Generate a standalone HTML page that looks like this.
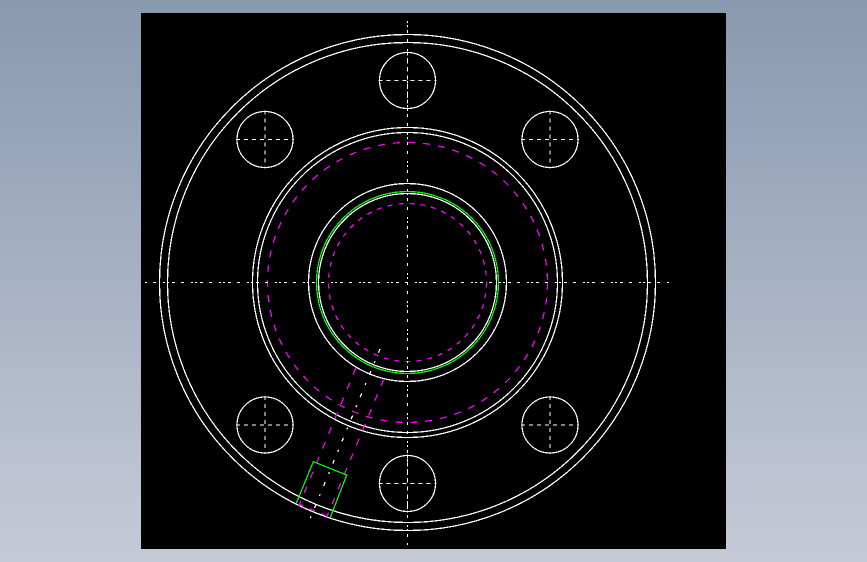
<!DOCTYPE html>
<html>
<head>
<meta charset="utf-8">
<style>
html,body{margin:0;padding:0;width:867px;height:562px;overflow:hidden}
body{background:linear-gradient(to bottom,#8899b0 0%,#c6cad7 100%);position:relative}
svg{position:absolute;left:0;top:0}
</style>
</head>
<body>
<svg width="867" height="562" viewBox="0 0 867 562" shape-rendering="crispEdges" fill="none" stroke-width="1.25">
<rect x="141" y="13" width="585" height="536" fill="#000"/>
<g stroke="#fff">
<circle cx="407.5" cy="282.5" r="248"/>
<circle cx="407.5" cy="282.5" r="240"/>
<circle cx="407.5" cy="282.5" r="155"/>
<circle cx="407.5" cy="282.5" r="150"/>
<circle cx="407.5" cy="282.5" r="99"/>
<circle cx="407.5" cy="282.5" r="89"/>
<circle cx="407.5" cy="80.5" r="28"/>
<circle cx="407.5" cy="483.5" r="28"/>
<circle cx="265" cy="139.5" r="28"/>
<circle cx="550" cy="139.5" r="28"/>
<circle cx="265" cy="425" r="28"/>
<circle cx="550" cy="425" r="28"/>
</g>
<circle cx="407.5" cy="282.5" r="91" stroke="#0f0"/>
<g stroke="#f0f">
<circle cx="407.5" cy="282.5" r="140" stroke-dasharray="7 8"/>
<circle cx="407.5" cy="282.5" r="79" stroke-dasharray="5 6"/>
<path d="M355.9 368.1L298.6 506.5" stroke-dasharray="7 9"/>
<path d="M383.6 379.6L326.3 518" stroke-dasharray="7 9"/>
<path d="M299 504L329 517" stroke-dasharray="5 7"/>
</g>
<g stroke="#fff" stroke-dasharray="2 2 2 3 3 6 3 7">
<path d="M145 282.5H669" stroke-dashoffset="10"/>
<path d="M407.5 21V545"/>
</g>
<path d="M380 349L310 519" stroke="#fff" stroke-dasharray="4 9 2 9"/>
<g stroke="#fff" stroke-dasharray="4 4">
<path d="M378.5 80.5H436.5M407.5 51.5V109.5"/>
<path d="M378.5 483.5H436.5M407.5 454.5V512.5"/>
<path d="M236 139.5H294M265 110.5V168.5"/>
<path d="M521 139.5H579M550 110.5V168.5"/>
<path d="M236 425H294M265 396V454"/>
<path d="M521 425H579M550 396V454"/>
</g>
<path d="M296 504L313.3 461.7L346.7 475L330 518.3" stroke="#0f0"/>
</svg>
</body>
</html>
